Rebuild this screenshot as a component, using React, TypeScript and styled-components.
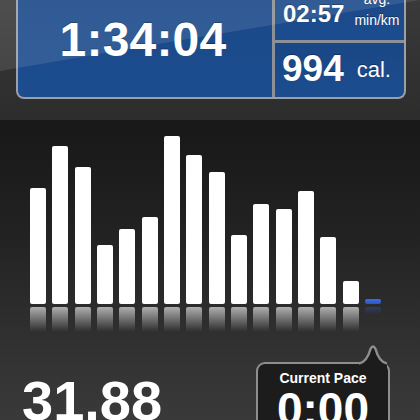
import React from 'react';
import styled, { createGlobalStyle } from 'styled-components';

const GlobalStyle = createGlobalStyle`
	html, body {
		margin: 0;
		padding: 0;
		background: #1a1a1a;
	}
	body {
		width: 420px;
		height: 420px;
		overflow: hidden;
		font-family: 'Liberation Sans', Arial, Helvetica, sans-serif;
		color: #fff;
	}
`;

const Screen = styled.div`
	width: 420px;
	height: 420px;
	display: flex;
	flex-direction: column;
	overflow: hidden;
`;

const Header = styled.div`
	position: relative;
	height: 120px;
	flex-shrink: 0;
	padding: 0 14px 0 16px;
	background: linear-gradient(#3a3a3a, #2c2c2c);
	overflow: hidden;

	/* the glassy highlight that crosses the whole top bar */
	&::after {
		content: '';
		position: absolute;
		inset: 0;
		background: rgba(255, 255, 255, 0.1);
		clip-path: polygon(0 0, 100% 0, 100% 0, 272px 25px, 140px 47px, 0 71px);
		pointer-events: none;
	}
`;

const StatsPanel = styled.div`
	margin-top: -30px;
	height: 129px;
	box-sizing: border-box;
	border: 2px solid #9ba0a6;
	border-top: none;
	border-radius: 0 0 8px 8px;
	background: #8d9197;
	display: grid;
	grid-template-columns: 254px 1fr;
	column-gap: 3px;
	overflow: hidden;
`;

const Cell = styled.div<{ $justify?: string }>`
	background: linear-gradient(#1a4785, #1c4d8f);
	display: flex;
	align-items: flex-end;
	justify-content: ${(p) => p.$justify || 'flex-start'};
	text-shadow: 0 -1px 0 rgba(0, 0, 0, 0.35);
`;

const TimeCell = styled(Cell)`
	padding-bottom: 33px;
	padding-right: 4px;
`;

const TimeValue = styled.div`
	font-size: 48px;
	line-height: 48px;
	font-weight: 700;
	letter-spacing: 0.2px;
`;

const SideColumn = styled.div`
	display: grid;
	grid-template-rows: 70px 54px;
	row-gap: 3px;
`;

const PaceCell = styled(Cell)`
	padding: 0 8px 9px 8px;
	gap: 10px;
`;

const PaceValue = styled.div`
	font-size: 24px;
	line-height: 24px;
	font-weight: 700;
	margin-bottom: 5px;
`;

const Units = styled.div`
	font-size: 14px;
	line-height: 21px;
	text-align: center;
`;

const CaloriesCell = styled(Cell)`
	padding: 0 8px 10px 7px;
	gap: 13px;
`;

const CaloriesValue = styled.div`
	font-size: 37px;
	line-height: 37px;
	font-weight: 700;
`;

const CaloriesUnit = styled.div`
	font-size: 22px;
	line-height: 22px;
	margin-bottom: 6px;
`;

const ChartSection = styled.div`
	flex: 1;
	padding-top: 16px;
	background: linear-gradient(#181818 0%, #222 35%, #333 75%, #3c3c3c 100%);
`;

const Bars = styled.div`
	height: 196px;
	padding-left: 30px;
	display: flex;
	align-items: flex-end;
	gap: 6.33px;
`;

const BarColumn = styled.div`
	width: 16px;
	display: flex;
	flex-direction: column;
	gap: 3px;
`;

const Bar = styled.div<{ $current?: boolean }>`
	width: 100%;
	border-radius: 2px;
	background: ${(p) => (p.$current ? 'linear-gradient(#3b6ee6, #2a56c4)' : '#fff')};
`;

const Reflection = styled.div<{ $current?: boolean }>`
	height: 25px;
	border-radius: 2px 2px 0 0;
	background: ${(p) =>
		p.$current
			? 'linear-gradient(rgba(50, 90, 200, 0.35), rgba(50, 90, 200, 0) 30%)'
			: 'linear-gradient(rgba(255, 255, 255, 0.62), rgba(255, 255, 255, 0.08) 85%, rgba(255, 255, 255, 0))'};
`;

const BottomRow = styled.div`
	margin-top: 30px;
	padding: 0 30px 0 22px;
	display: flex;
	justify-content: space-between;
	align-items: flex-start;
`;

const Distance = styled.div`
	margin-top: 11px;
	font-size: 56px;
	line-height: 56px;
	font-weight: 700;
`;

const PaceBubble = styled.div`
	position: relative;
	width: 134px;
	height: 80px;
	box-sizing: border-box;
	padding-top: 6px;
	border: 2.5px solid #8e8e8e;
	border-radius: 9px;
	background: #1c1c1c;
	text-align: center;
`;

const BubbleTip = styled.svg`
	position: absolute;
	left: 101px;
	top: -20px;
`;

const BubbleLabel = styled.div`
	font-size: 14px;
	line-height: 16px;
	font-weight: 700;
`;

const BubbleValue = styled.div`
	font-size: 46px;
	line-height: 46px;
	font-weight: 700;
`;

const splits = [116, 158, 137, 59, 75, 87, 168, 149, 132, 69, 100, 95, 113, 67, 23];

const App = () => {
	return (
		<Screen>
			<GlobalStyle />
			<Header>
				<StatsPanel>
					<TimeCell $justify="center">
						<TimeValue>1:34:04</TimeValue>
					</TimeCell>
					<SideColumn>
						<PaceCell>
							<PaceValue>02:57</PaceValue>
							<Units>
								avg.
								<br />
								min/km
							</Units>
						</PaceCell>
						<CaloriesCell>
							<CaloriesValue>994</CaloriesValue>
							<CaloriesUnit>cal.</CaloriesUnit>
						</CaloriesCell>
					</SideColumn>
				</StatsPanel>
			</Header>

			<ChartSection>
				<Bars>
					{splits.map((h, i) => (
						<BarColumn key={i}>
							<Bar style={{ height: h }} />
							<Reflection />
						</BarColumn>
					))}
					<BarColumn>
						<Bar $current style={{ height: 5 }} />
						<Reflection $current />
					</BarColumn>
				</Bars>

				<BottomRow>
					<Distance>31.88</Distance>
					<PaceBubble>
						<BubbleTip width="28" height="24" viewBox="0 0 28 24">
							<path d="M0 24 L0 19.5 Q8 18 11.5 5 Q14 0 16.5 5 Q20 18 28 19.5 L28 24 Z" fill="#1c1c1c" />
							<path
								d="M0 19.5 Q8 18 11.5 5 Q14 0 16.5 5 Q20 18 28 19.5"
								fill="none"
								stroke="#8e8e8e"
								strokeWidth="2.5"
								strokeLinejoin="round"
							/>
						</BubbleTip>
						<BubbleLabel>Current Pace</BubbleLabel>
						<BubbleValue>0:00</BubbleValue>
					</PaceBubble>
				</BottomRow>
			</ChartSection>
		</Screen>
	);
};

export default App;
